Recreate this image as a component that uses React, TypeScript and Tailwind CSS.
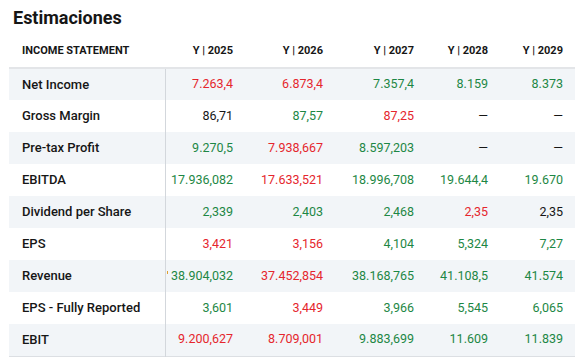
const YEARS = ['2025', '2026', '2027', '2028', '2029']

type Tone = 'r' | 'g' | 'k'
type Cell = [string, Tone]

const ROWS: { label: string; cells: Cell[]; tick?: boolean }[] = [
  { label: 'Net Income',          cells: [['7.263,4', 'r'], ['6.873,4', 'r'], ['7.357,4', 'g'], ['8.159', 'g'], ['8.373', 'g']] },
  { label: 'Gross Margin',        cells: [['86,71', 'k'], ['87,57', 'g'], ['87,25', 'r'], ['—', 'k'], ['—', 'k']] },
  { label: 'Pre-tax Profit',      cells: [['9.270,5', 'g'], ['7.938,667', 'r'], ['8.597,203', 'g'], ['—', 'k'], ['—', 'k']] },
  { label: 'EBITDA',              cells: [['17.936,082', 'g'], ['17.633,521', 'r'], ['18.996,708', 'g'], ['19.644,4', 'g'], ['19.670', 'g']] },
  { label: 'Dividend per Share',  cells: [['2,339', 'g'], ['2,403', 'g'], ['2,468', 'g'], ['2,35', 'r'], ['2,35', 'k']] },
  { label: 'EPS',                 cells: [['3,421', 'r'], ['3,156', 'r'], ['4,104', 'g'], ['5,324', 'g'], ['7,27', 'g']] },
  { label: 'Revenue',             cells: [['38.904,032', 'g'], ['37.452,854', 'r'], ['38.168,765', 'g'], ['41.108,5', 'g'], ['41.574', 'g']], tick: true },
  { label: 'EPS - Fully Reported', cells: [['3,601', 'g'], ['3,449', 'r'], ['3,966', 'g'], ['5,545', 'g'], ['6,065', 'g']] },
  { label: 'EBIT',                cells: [['9.200,627', 'r'], ['8.709,001', 'r'], ['9.883,699', 'g'], ['11.609', 'g'], ['11.839', 'g']] },
]

const TONE: Record<Tone, string> = {
  r: 'text-[#e5262d]',
  g: 'text-[#1d8745]',
  k: 'text-[#161616]',
}

export default function App() {
  return (
    <div className="w-[580px] h-[359px] bg-white overflow-hidden font-['Roboto','Liberation_Sans',sans-serif] text-[#161616]">
      <h2 className="pl-[13px] pt-[5px] text-[18px] leading-[26px] font-bold">Estimaciones</h2>

      <table className="ml-[9px] mt-[5px] w-[566px] table-fixed border-collapse">
        <colgroup>
          <col className="w-[156px]" />
          <col className="w-[80px]" />
          <col className="w-[90px]" />
          <col className="w-[91px]" />
          <col className="w-[74px]" />
          <col className="w-[75px]" />
        </colgroup>
        <thead>
          <tr className="h-[32px] border-b-2 border-[#e3e5e8]">
            <th className="pl-[13px] pb-[1px] text-left text-[11px] font-bold">INCOME STATEMENT</th>
            {YEARS.map(y => (
              <th key={y} className="pr-[12px] pb-[1px] text-right text-[11px] font-bold">Y | {y}</th>
            ))}
          </tr>
        </thead>
        <tbody>
          {ROWS.map((row, i) => (
            <tr key={row.label}
              className={`h-[32px] ${i % 2 === 0 ? 'bg-[#f2f5f8]' : 'bg-white'} ${i === ROWS.length - 1 ? 'border-b border-[#dcdfe3]' : ''}`}>
              <td className="pl-[13px] text-[13px] font-medium border-r border-[#d3d7dc]">{row.label}</td>
              {row.cells.map(([v, t], j) => (
                <td key={j} className={`relative pr-[12px] text-right text-[12.5px] ${TONE[t]}`}>
                  {row.tick && j === 0 && (
                    <span className="absolute left-[1px] top-[11px] w-[1px] h-[3px] bg-[#e0a030]" />
                  )}
                  {v}
                </td>
              ))}
            </tr>
          ))}
        </tbody>
      </table>
    </div>
  )
}
